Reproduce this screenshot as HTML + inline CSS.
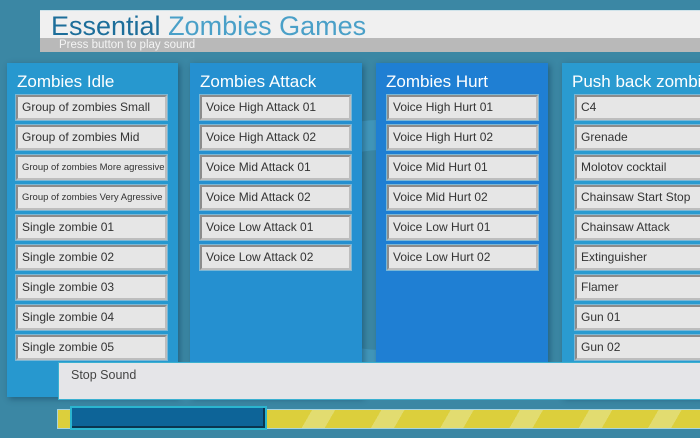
<!DOCTYPE html>
<html><head><style>
*{margin:0;padding:0;box-sizing:border-box}
body{width:700px;height:438px;overflow:hidden;background:#3b87a4;font-family:"Liberation Sans",sans-serif;position:relative}
.a{position:absolute}
.title{left:40px;top:10px;width:660px;height:42px;background:#f0f0f0;border-top:1px solid #cfe3ea}
.title h1{position:absolute;left:11px;top:0px;font-weight:normal;font-size:27px;color:#1d6e9a;white-space:nowrap}
.title h1 span{color:#4aa0c8}
.sub{position:absolute;left:0;top:27px;width:660px;height:14px;background:#b9b9b9;color:#f4f4f4;font-size:11.5px;padding-left:19px;line-height:14px}
.panel{background:#2798cf;box-shadow:2px 2px 6px rgba(0,40,70,.4)}
.panel h2{position:absolute;left:10px;top:9px;font-weight:normal;font-size:17px;color:#fff;white-space:nowrap}
.btn{position:absolute;height:25px;background:#e6e6e6;border:2px solid #bdbdbd;border-top-color:#8c8c8c;border-left-color:#8c8c8c;outline:1px solid #7ab7d6;color:#333;font-size:12px;line-height:21px;padding-left:4px;white-space:nowrap;overflow:hidden}
</style></head><body>
<div class="a" style="left:250px;top:120px;width:260px;height:260px;border-radius:50%;border:30px solid rgba(80,180,230,.35)"></div>
<div class="a title"><h1>Essential <span>Zombies Games</span></h1><div class="sub">Press button to play sound</div></div>

<div class="a panel" style="left:7px;top:63px;width:171px;height:334px"><h2>Zombies Idle</h2></div>
<div class="a panel" style="left:190px;top:63px;width:172px;height:334px;background:#2590d0"><h2>Zombies Attack</h2></div>
<div class="a panel" style="left:376px;top:63px;width:172px;height:300px;background:#1f7fd3"><h2>Zombies Hurt</h2></div>
<div class="a panel" style="left:562px;top:63px;width:140px;height:334px;background:#2a9bd0"><h2>Push back zombies</h2></div>

<div class="btn" style="left:16px;top:95px;width:151px">Group of zombies Small</div>
<div class="btn" style="left:16px;top:125px;width:151px">Group of zombies Mid</div>
<div class="btn" style="left:16px;top:155px;width:151px;font-size:9.5px">Group of zombies More agressive</div>
<div class="btn" style="left:16px;top:185px;width:151px;font-size:9.5px">Group of zombies Very Agressive</div>
<div class="btn" style="left:16px;top:215px;width:151px">Single zombie 01</div>
<div class="btn" style="left:16px;top:245px;width:151px">Single zombie 02</div>
<div class="btn" style="left:16px;top:275px;width:151px">Single zombie 03</div>
<div class="btn" style="left:16px;top:305px;width:151px">Single zombie 04</div>
<div class="btn" style="left:16px;top:335px;width:151px">Single zombie 05</div>

<div class="btn" style="left:200px;top:95px;width:151px">Voice High Attack 01</div>
<div class="btn" style="left:200px;top:125px;width:151px">Voice High Attack 02</div>
<div class="btn" style="left:200px;top:155px;width:151px">Voice Mid Attack 01</div>
<div class="btn" style="left:200px;top:185px;width:151px">Voice Mid Attack 02</div>
<div class="btn" style="left:200px;top:215px;width:151px">Voice Low Attack 01</div>
<div class="btn" style="left:200px;top:245px;width:151px">Voice Low Attack 02</div>

<div class="btn" style="left:387px;top:95px;width:151px">Voice High Hurt 01</div>
<div class="btn" style="left:387px;top:125px;width:151px">Voice High Hurt 02</div>
<div class="btn" style="left:387px;top:155px;width:151px">Voice Mid Hurt 01</div>
<div class="btn" style="left:387px;top:185px;width:151px">Voice Mid Hurt 02</div>
<div class="btn" style="left:387px;top:215px;width:151px">Voice Low Hurt 01</div>
<div class="btn" style="left:387px;top:245px;width:151px">Voice Low Hurt 02</div>

<div class="btn" style="left:575px;top:95px;width:130px">C4</div>
<div class="btn" style="left:575px;top:125px;width:130px">Grenade</div>
<div class="btn" style="left:575px;top:155px;width:130px">Molotov cocktail</div>
<div class="btn" style="left:575px;top:185px;width:130px">Chainsaw Start Stop</div>
<div class="btn" style="left:575px;top:215px;width:130px">Chainsaw Attack</div>
<div class="btn" style="left:575px;top:245px;width:130px">Extinguisher</div>
<div class="btn" style="left:575px;top:275px;width:130px">Flamer</div>
<div class="btn" style="left:575px;top:305px;width:130px">Gun 01</div>
<div class="btn" style="left:575px;top:335px;width:130px">Gun 02</div>

<div class="a" style="left:58px;top:362px;width:645px;height:38px;background:#e5e5e8;border:1px solid #3bb0d0;color:#444;font-size:12.5px;padding:5px 0 0 12px">Stop Sound</div>
<div class="a" style="left:57px;top:409px;width:645px;height:20px;background:repeating-linear-gradient(120deg,#dccf3c 0 40px,#e2dc70 40px 60px);border:1px solid #a8d4e0"></div>
<div class="a" style="left:70px;top:406px;width:197px;height:24px;background:#0d6498;border:2px solid #2bb5cf;box-shadow:inset -2px -2px 0 #0a3550"></div>
</body></html>
